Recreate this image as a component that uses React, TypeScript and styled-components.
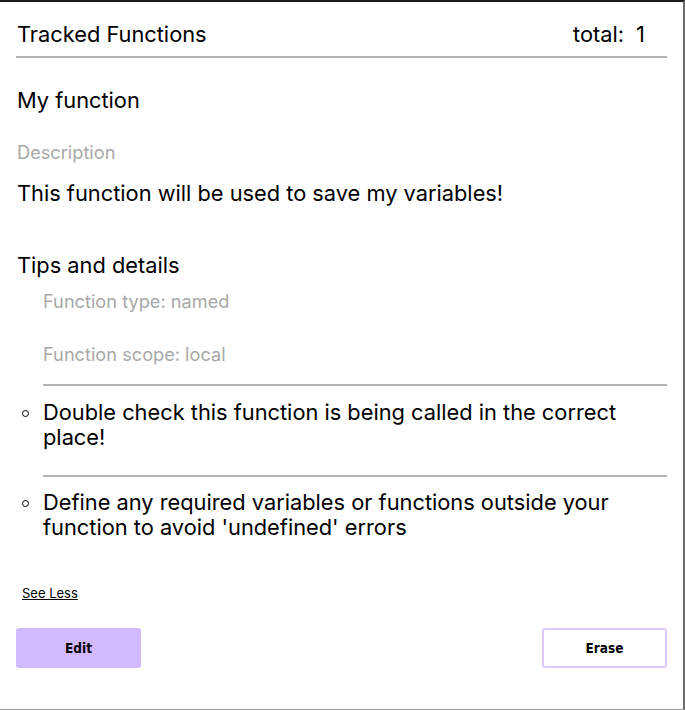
import React from 'react';
import styled, { createGlobalStyle } from 'styled-components';

const GlobalStyle = createGlobalStyle`
  body {
    margin: 0;
    font-family: Inter, "Noto Sans", sans-serif;
    color: #000;
    background: #fff;
  }
`;

const Card = styled.div`
  box-sizing: border-box;
  width: 685px;
  height: 710px;
  padding: 0 16px 0 16px;
  border-top: 2px solid #1a1a1a;
  border-right: 2px solid #6b6b6b;
  border-bottom: 1px solid #9a9a9a;
  display: flex;
  flex-direction: column;
`;

const Header = styled.div`
  display: flex;
  justify-content: space-between;
  align-items: center;
  padding: 18px 0 8px 1px;
  border-bottom: 2px solid #b3b3b3;
  font-size: 21.8px;
  line-height: 28px;
`;

const Total = styled.span`
  margin-right: 22px;
  word-spacing: 6px;
`;

const Title = styled.div<{ $gap: number }>`
  margin-top: ${(p) => p.$gap}px;
  padding-left: 1px;
  font-size: 21.8px;
  line-height: 28px;
`;

const Muted = styled.div<{ $gap: number }>`
  margin-top: ${(p) => p.$gap}px;
  padding-left: 1px;
  font-size: 18.2px;
  line-height: 24px;
  color: #a8a8a8;
`;

const Details = styled.div`
  padding-left: 26px;
  display: flex;
  flex-direction: column;
`;

const Rule = styled.hr<{ $gap: number }>`
  margin: ${(p) => p.$gap}px 0 0 1px;
  border: 0;
  border-top: 2px solid #b3b3b3;
`;

const Tip = styled.div<{ $gap: number }>`
  margin-top: ${(p) => p.$gap}px;
  margin-left: -20px;
  display: flex;
  align-items: flex-start;
  gap: 14px;
  font-size: 21.8px;
  line-height: 25px;
`;

const Bullet = styled.span`
  flex: none;
  box-sizing: border-box;
  width: 7px;
  height: 7px;
  margin-top: 10px;
  border: 1px solid #000;
  border-radius: 50%;
`;

const SeeLess = styled.a`
  margin-top: 44px;
  margin-left: 6px;
  align-self: flex-start;
  font-size: 13px;
  line-height: 18px;
  color: #000;
  text-decoration: underline;
  cursor: pointer;
`;

const Actions = styled.div`
  margin-top: 26px;
  display: flex;
  justify-content: space-between;
`;

const Button = styled.button<{ $filled?: boolean }>`
  box-sizing: border-box;
  width: 125px;
  height: 40px;
  border-radius: 3px;
  border: 2px solid ${(p) => (p.$filled ? '#d2b8fe' : '#ddc9ff')};
  background: ${(p) => (p.$filled ? '#d2b8fe' : '#fff')};
  font-family: "DejaVu Sans Condensed", Inter, sans-serif;
  font-weight: bold;
  font-size: 13.5px;
  color: #000;
  cursor: pointer;
`;

export default function App() {
  return (
    <>
      <GlobalStyle />
      <Card>
        <Header>
          <span>Tracked Functions</span>
          <Total>total: 1</Total>
        </Header>
        <Title $gap={28}>My function</Title>
        <Muted $gap={26}>Description</Muted>
        <Title $gap={15}>This function will be used to save my variables!</Title>
        <Title $gap={44}>Tips and details</Title>
        <Details>
          <Muted $gap={10}>Function type: named</Muted>
          <Muted $gap={29}>Function scope: local</Muted>
          <Rule $gap={18} />
          <Tip $gap={14}>
            <Bullet />
            <span>Double check this function is being called in the correct place!</span>
          </Tip>
          <Rule $gap={25} />
          <Tip $gap={13}>
            <Bullet />
            <span>Define any required variables or functions outside your function to avoid 'undefined' errors</span>
          </Tip>
        </Details>
        <SeeLess>See Less</SeeLess>
        <Actions>
          <Button $filled>Edit</Button>
          <Button>Erase</Button>
        </Actions>
      </Card>
    </>
  );
}
